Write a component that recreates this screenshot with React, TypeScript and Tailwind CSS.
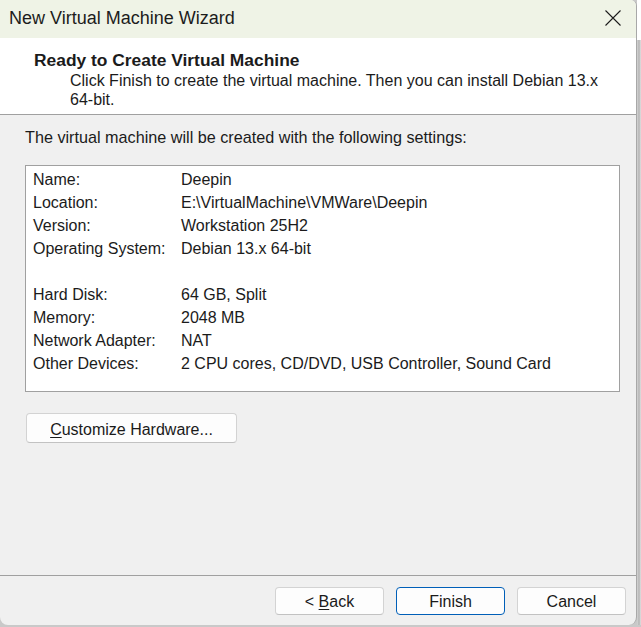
// New Virtual Machine Wizard — final "Ready to Create" page.
const SETTINGS: Array<[string, string] | null> = [
  ["Name:", "Deepin"],
  ["Location:", "E:\\VirtualMachine\\VMWare\\Deepin"],
  ["Version:", "Workstation 25H2"],
  ["Operating System:", "Debian 13.x 64-bit"],
  null,
  ["Hard Disk:", "64 GB, Split"],
  ["Memory:", "2048 MB"],
  ["Network Adapter:", "NAT"],
  ["Other Devices:", "2 CPU cores, CD/DVD, USB Controller, Sound Card"],
];

function WizardButton({
  children,
  primary = false,
}: {
  children: React.ReactNode;
  primary?: boolean;
}) {
  return (
    <button
      className={
        primary
          ? "h-[28px] w-[109px] rounded-[4px] border border-[#005fb8] bg-[#fdfdfd] pt-[2px] text-[16px] leading-none text-[#1a1a1a]"
          : "h-[28px] w-[109px] rounded-[4px] border border-[#d3d3d3] border-b-[#c2c2c2] bg-[#fdfdfd] pt-[2px] text-[16px] leading-none text-[#1a1a1a]"
      }
    >
      {children}
    </button>
  );
}

export default function App() {
  return (
    <div
      className="flex h-[627px] w-[641px] flex-col bg-[#c9c9c9]"
      style={{ fontFamily: '"Liberation Sans", Arial, sans-serif' }}
    >
      <div className="flex h-[625px] w-[641px]">
        <div className="flex h-[625px] w-[637px] flex-col overflow-hidden rounded-tr-[6px] rounded-b-[8px] border-r border-[#a8a8a8] bg-[#f0f0f0] text-[#1b1b1b]">
          {/* title bar */}
          <div className="flex h-[38px] shrink-0 items-center justify-between bg-[#eff3e6] pl-[9px] pr-[15px]">
            <span className="pb-[2px] text-[18px] leading-none text-[#1c1c1c]">New Virtual Machine Wizard</span>
            <svg width="16" height="16" viewBox="0 0 16 16" className="mb-[2px] text-[#1c1c1c]">
              <path d="M0.5 0.5 L15.5 15.5 M15.5 0.5 L0.5 15.5" stroke="currentColor" strokeWidth="1.1" fill="none" />
            </svg>
          </div>

          {/* header */}
          <div className="h-[77px] shrink-0 border-b border-[#a0a0a0] bg-white pl-[34px] pt-[11px]">
            <div className="text-[17.4px] font-bold leading-[22px]">Ready to Create Virtual Machine</div>
            <div className="pl-[36px] text-[16px] leading-[19px]">
              Click Finish to create the virtual machine. Then you can install Debian 13.x
              <br />
              64-bit.
            </div>
          </div>

          {/* body */}
          <div className="flex flex-1 flex-col pl-[25px] pt-[12px]">
            <div className="text-[16.2px] leading-[20px]">
              The virtual machine will be created with the following settings:
            </div>
            <div className="mt-[18px] h-[227px] w-[595px] border border-[#a0a0a0] bg-white pl-[7px] pt-[2px] text-[16px] leading-[23px]">
              {SETTINGS.map((row, i) =>
                row ? (
                  <div key={i} className="flex">
                    <span className="w-[148px] shrink-0">{row[0]}</span>
                    <span>{row[1]}</span>
                  </div>
                ) : (
                  <div key={i} className="h-[23px]" />
                ),
              )}
            </div>
            <button className="ml-px mt-[21px] h-[30px] w-[211px] rounded-[4px] border border-[#d3d3d3] border-b-[#c2c2c2] bg-[#fdfdfd] pt-[3px] text-[16px] leading-none text-[#1a1a1a]">
              <span className="underline underline-offset-2">C</span>ustomize Hardware...
            </button>
          </div>

          {/* footer */}
          <div className="flex h-[50px] shrink-0 items-start justify-end gap-[12px] border-t border-[#a0a0a0] pr-[10px] pt-[11px]">
            <WizardButton>
              &lt; <span className="underline underline-offset-2">B</span>ack
            </WizardButton>
            <WizardButton primary>Finish</WizardButton>
            <WizardButton>Cancel</WizardButton>
          </div>
        </div>
        <div className="flex w-[4px] flex-col">
          <div className="h-[40px] bg-white" />
          <div className="flex-1 bg-[linear-gradient(to_right,#d6d6d6,#b4b4b4,#e2e2e2)]" />
        </div>
      </div>
    </div>
  );
}
